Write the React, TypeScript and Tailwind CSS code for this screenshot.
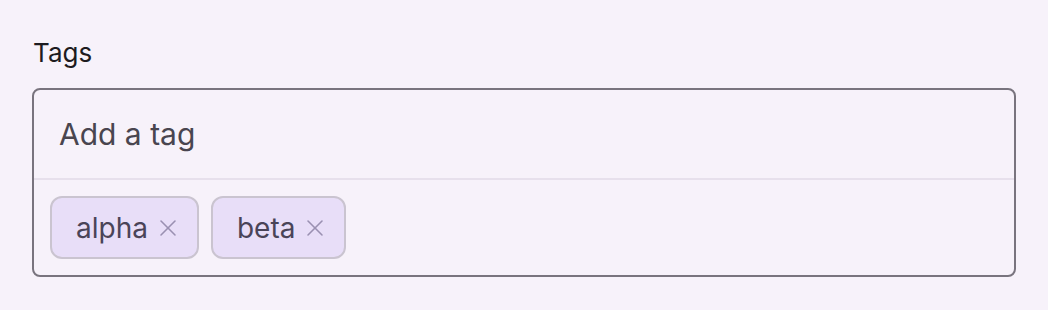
import { X } from 'lucide-react'

const tags = ['alpha', 'beta']

export default function App() {
  return (
    <div
      className="min-h-[310px] w-full bg-[#f7f2fa] px-8 pt-[35px]"
      style={{ fontFamily: 'Inter, "Noto Sans", sans-serif' }}
    >
      <label className="block pl-px text-[26px] leading-[36px] text-[#1d1b20]">Tags</label>
      <div className="mt-[17px] rounded-[8px] border-2 border-[#79747e]">
        <div className="flex h-[88px] items-center px-[25px]">
          <span className="text-[30px] text-[#49454f]">Add a tag</span>
        </div>
        <div className="h-[2px] bg-[#e7e0ec]" />
        <div className="flex gap-3 px-4 py-4">
          {tags.map((tag) => (
            <div
              key={tag}
              className="flex h-[63px] items-center gap-[6px] rounded-[12px] border-2 border-[#cac4d0] bg-[#e8def8] pl-6 pr-[15px]"
            >
              <span className="text-[28px] text-[#4a4458]">{tag}</span>
              <X className="h-[28px] w-[28px] text-[#9a90b2]" strokeWidth={1.3} />
            </div>
          ))}
        </div>
      </div>
    </div>
  )
}
